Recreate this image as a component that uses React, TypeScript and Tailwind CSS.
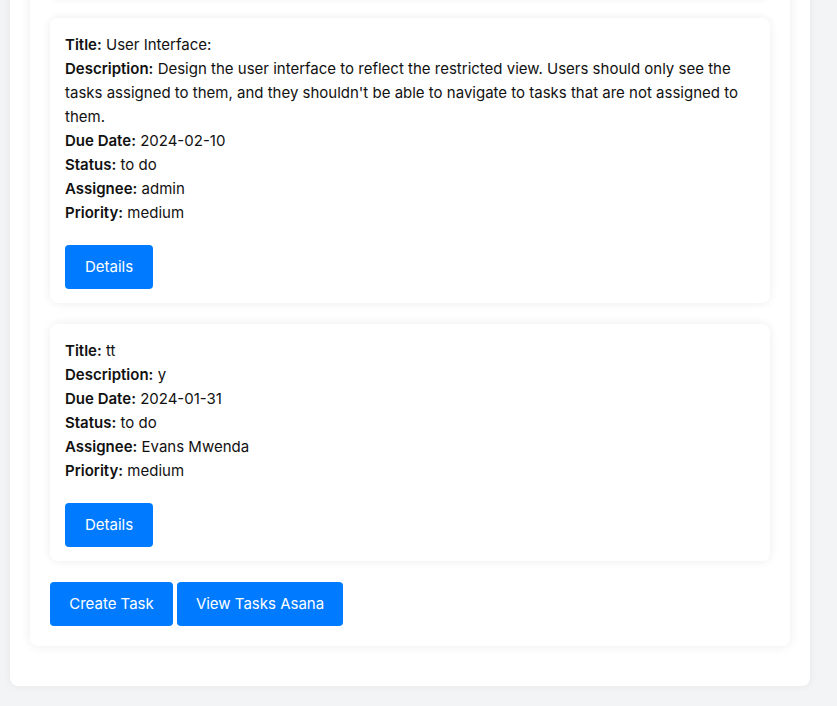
import React from "react";

type Task = {
  title: string;
  description: string;
  due: string;
  status: string;
  assignee: string;
  priority: string;
};

const tasks: Task[] = [
  {
    title: "User Interface:",
    description:
      "Design the user interface to reflect the restricted view. Users should only see the tasks assigned to them, and they shouldn't be able to navigate to tasks that are not assigned to them.",
    due: "2024-02-10",
    status: "to do",
    assignee: "admin",
    priority: "medium",
  },
  {
    title: "tt",
    description: "y",
    due: "2024-01-31",
    status: "to do",
    assignee: "Evans Mwenda",
    priority: "medium",
  },
];

function Row({ label, value }: { label: string; value: string }) {
  return (
    <p className="m-0 leading-[24px]">
      <strong className="font-semibold">{label}:</strong> {value}
    </p>
  );
}

function TaskCard({ t }: { t: Task }) {
  return (
    <div className="bg-white rounded-lg shadow-[0_0_10px_rgba(0,0,0,0.08)] px-[15px] pt-[15px] pb-[14px] mb-[21px]">
      <Row label="Title" value={t.title} />
      <Row label="Description" value={t.description} />
      <Row label="Due Date" value={t.due} />
      <Row label="Status" value={t.status} />
      <Row label="Assignee" value={t.assignee} />
      <Row label="Priority" value={t.priority} />
      <button className="mt-[20px] h-[44px] w-[88px] bg-[#007bff] text-white rounded-[4px] text-[15px]">
        Details
      </button>
    </div>
  );
}

export default function App() {
  return (
    <div
      className="min-h-[706px] bg-[#f3f4f6] text-[#111] text-[15px] overflow-hidden"
      style={{ fontFamily: "Inter, 'Noto Sans', sans-serif" }}
    >
      <div className="-mt-[200px] w-[800px] ml-[10px] bg-white rounded-lg shadow-[0_0_8px_rgba(0,0,0,0.06)] px-[20px] pt-[20px] pb-[40px]">
        <div className="bg-white rounded-lg shadow-[0_0_12px_rgba(0,0,0,0.08)] px-[20px] pt-[20px] pb-[20px]">
          <div className="bg-white rounded-lg shadow-[0_0_10px_rgba(0,0,0,0.08)] h-[158px] mb-[20px]" />
          {tasks.map((t, i) => (
            <TaskCard key={i} t={t} />
          ))}
          <div className="flex gap-[4px]">
            <button className="h-[44px] w-[123px] bg-[#007bff] text-white rounded-[4px] text-[15px]">
              Create Task
            </button>
            <button className="h-[44px] w-[166px] bg-[#007bff] text-white rounded-[4px] text-[15px]">
              View Tasks Asana
            </button>
          </div>
        </div>
      </div>
    </div>
  );
}
